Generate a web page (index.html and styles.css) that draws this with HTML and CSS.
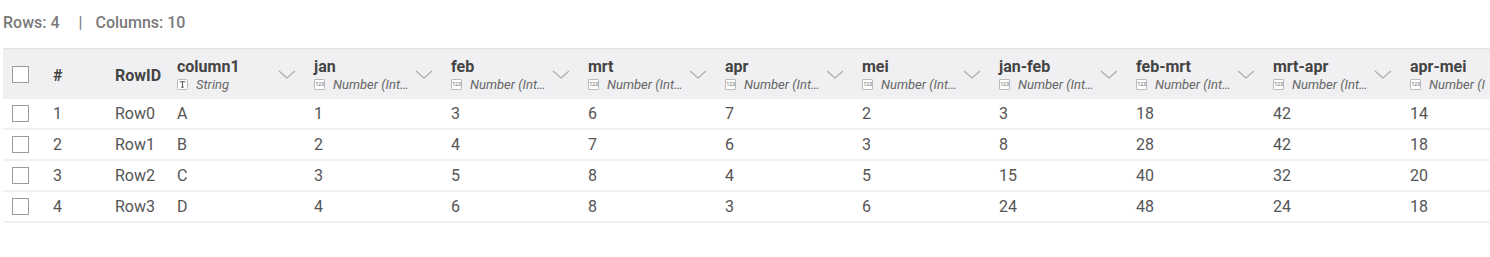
FILE: index.html
```html
<!DOCTYPE html>
<html>
<head>
<meta charset="utf-8">
<link rel="stylesheet" href="styles.css">
</head>
<body>
<div class="page">
  <div class="summary"><span>Rows: 4</span><span class="sep">|</span><span>Columns: 10</span></div>
  <div class="table">
    <div class="row head">
      <div class="cell c-check"><span class="box"></span></div>
      <div class="cell c-num"><b>#</b></div>
      <div class="cell c-id"><b>RowID</b></div>
      <div class="cell c-data"><div class="hd"><div class="title">column1</div><div class="type"><svg class="ti" viewBox="0 0 11 11"><rect x="0.5" y="0.5" width="10" height="10" rx="1" fill="#fff" stroke="#bbb"/><path d="M2.8 2.8h5.4M5.5 2.8v5.4M4.2 8.2h2.6" stroke="#555" stroke-width="1" fill="none"/></svg><i>String</i></div></div><svg class="chev" viewBox="0 0 18 10"><path d="M1 1l8 7 8-7" fill="none" stroke="#aaa" stroke-width="1.1"/></svg></div>
      <div class="cell c-data"><div class="hd"><div class="title">jan</div><div class="type"><span class="ni">123</span><i>Number (Int…</i></div></div><svg class="chev" viewBox="0 0 18 10"><path d="M1 1l8 7 8-7" fill="none" stroke="#aaa" stroke-width="1.1"/></svg></div>
      <div class="cell c-data"><div class="hd"><div class="title">feb</div><div class="type"><span class="ni">123</span><i>Number (Int…</i></div></div><svg class="chev" viewBox="0 0 18 10"><path d="M1 1l8 7 8-7" fill="none" stroke="#aaa" stroke-width="1.1"/></svg></div>
      <div class="cell c-data"><div class="hd"><div class="title">mrt</div><div class="type"><span class="ni">123</span><i>Number (Int…</i></div></div><svg class="chev" viewBox="0 0 18 10"><path d="M1 1l8 7 8-7" fill="none" stroke="#aaa" stroke-width="1.1"/></svg></div>
      <div class="cell c-data"><div class="hd"><div class="title">apr</div><div class="type"><span class="ni">123</span><i>Number (Int…</i></div></div><svg class="chev" viewBox="0 0 18 10"><path d="M1 1l8 7 8-7" fill="none" stroke="#aaa" stroke-width="1.1"/></svg></div>
      <div class="cell c-data"><div class="hd"><div class="title">mei</div><div class="type"><span class="ni">123</span><i>Number (Int…</i></div></div><svg class="chev" viewBox="0 0 18 10"><path d="M1 1l8 7 8-7" fill="none" stroke="#aaa" stroke-width="1.1"/></svg></div>
      <div class="cell c-data"><div class="hd"><div class="title">jan-feb</div><div class="type"><span class="ni">123</span><i>Number (Int…</i></div></div><svg class="chev" viewBox="0 0 18 10"><path d="M1 1l8 7 8-7" fill="none" stroke="#aaa" stroke-width="1.1"/></svg></div>
      <div class="cell c-data"><div class="hd"><div class="title">feb-mrt</div><div class="type"><span class="ni">123</span><i>Number (Int…</i></div></div><svg class="chev" viewBox="0 0 18 10"><path d="M1 1l8 7 8-7" fill="none" stroke="#aaa" stroke-width="1.1"/></svg></div>
      <div class="cell c-data"><div class="hd"><div class="title">mrt-apr</div><div class="type"><span class="ni">123</span><i>Number (Int…</i></div></div><svg class="chev" viewBox="0 0 18 10"><path d="M1 1l8 7 8-7" fill="none" stroke="#aaa" stroke-width="1.1"/></svg></div>
      <div class="cell c-data"><div class="hd"><div class="title">apr-mei</div><div class="type"><span class="ni">123</span><i>Number (I</i></div></div><svg class="chev" viewBox="0 0 18 10"><path d="M1 1l8 7 8-7" fill="none" stroke="#aaa" stroke-width="1.1"/></svg></div>
    </div>
    <div class="row">
      <div class="cell c-check"><span class="box"></span></div><div class="cell c-num">1</div><div class="cell c-id">Row0</div>
      <div class="cell c-data">A</div><div class="cell c-data">1</div><div class="cell c-data">3</div><div class="cell c-data">6</div><div class="cell c-data">7</div><div class="cell c-data">2</div><div class="cell c-data">3</div><div class="cell c-data">18</div><div class="cell c-data">42</div><div class="cell c-data">14</div>
    </div>
    <div class="row">
      <div class="cell c-check"><span class="box"></span></div><div class="cell c-num">2</div><div class="cell c-id">Row1</div>
      <div class="cell c-data">B</div><div class="cell c-data">2</div><div class="cell c-data">4</div><div class="cell c-data">7</div><div class="cell c-data">6</div><div class="cell c-data">3</div><div class="cell c-data">8</div><div class="cell c-data">28</div><div class="cell c-data">42</div><div class="cell c-data">18</div>
    </div>
    <div class="row">
      <div class="cell c-check"><span class="box"></span></div><div class="cell c-num">3</div><div class="cell c-id">Row2</div>
      <div class="cell c-data">C</div><div class="cell c-data">3</div><div class="cell c-data">5</div><div class="cell c-data">8</div><div class="cell c-data">4</div><div class="cell c-data">5</div><div class="cell c-data">15</div><div class="cell c-data">40</div><div class="cell c-data">32</div><div class="cell c-data">20</div>
    </div>
    <div class="row">
      <div class="cell c-check"><span class="box"></span></div><div class="cell c-num">4</div><div class="cell c-id">Row3</div>
      <div class="cell c-data">D</div><div class="cell c-data">4</div><div class="cell c-data">6</div><div class="cell c-data">8</div><div class="cell c-data">3</div><div class="cell c-data">6</div><div class="cell c-data">24</div><div class="cell c-data">48</div><div class="cell c-data">24</div><div class="cell c-data">18</div>
    </div>
  </div>
</div>
</body>
</html>
```
FILE: styles.css
```css
html, body {
  margin: 0;
  padding: 0;
  background: #fff;
  overflow: hidden;
}
.page {
  font-family: Roboto, "Liberation Sans", sans-serif;
  color: #555;
  padding-left: 3px;
  width: 1487px;
  overflow: hidden;
}
.summary {
  height: 48px;
  display: flex;
  align-items: center;
  box-sizing: border-box;
  font-size: 16px;
  font-weight: 500;
  color: #7a7a7a;
  padding-bottom: 4px;
}
.summary .sep {
  margin: 0 13px 0 19px;
  font-weight: 400;
}
.table {
  border-top: 1px solid #e2e2e2;
  width: 1560px;
}
.row {
  display: flex;
  height: 31px;
  border-bottom: 2px solid #f1f1f3;
  box-sizing: border-box;
  align-items: center;
  font-size: 16px;
  color: #555;
}
.row.head {
  height: 50px;
  padding-top: 3px;
  background: #f0f0f2;
  border-bottom: none;
  color: #444;
}
.cell {
  flex: none;
  display: flex;
  align-items: center;
  height: 100%;
  box-sizing: border-box;
  white-space: nowrap;
}
.c-check { width: 50px; padding-left: 9px; }
.c-num { width: 62px; }
.c-id { width: 62px; }
.c-data { width: 137px; }
.head .c-check { margin-top: -2px; }
.head b { font-weight: 700; font-size: 16px; color: #444; }
.box {
  width: 17px;
  height: 17px;
  border: 1.5px solid #9c9c9c;
  box-sizing: border-box;
  background: #fff;
}
.hd {
  display: flex;
  flex-direction: column;
  justify-content: center;
  padding-bottom: 1px;
}
.title {
  font-size: 16px;
  font-weight: 700;
  color: #444;
  line-height: 18px;
}
.type {
  display: flex;
  align-items: center;
  gap: 8px;
  font-size: 13px;
  color: #666;
  line-height: 16px;
  margin-top: 1px;
}
.type i { font-style: italic; }
.ti { width: 11px; height: 11px; }
.ni {
  width: 11px;
  height: 11px;
  box-sizing: border-box;
  border: 1px solid #bbb;
  border-radius: 1px;
  background: #fff;
  font-size: 5.5px;
  line-height: 9px;
  text-align: center;
  color: #666;
  font-style: normal;
  letter-spacing: -0.2px;
}
.chev {
  width: 18px;
  height: 10px;
  margin-left: auto;
  margin-right: 18px;
  margin-top: -2px;
}
```
